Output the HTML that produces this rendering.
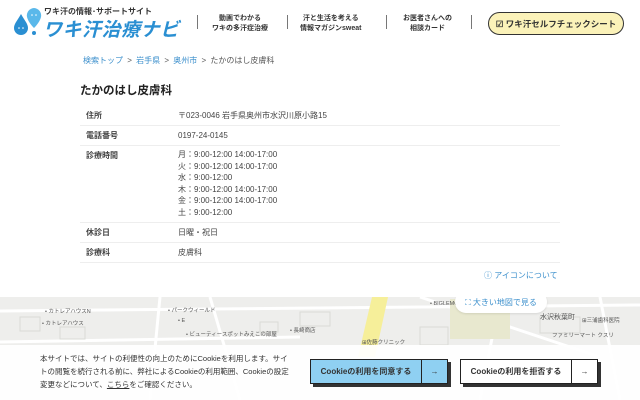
<!DOCTYPE html>
<html lang="ja"><head><meta charset="utf-8">
<style>
*{margin:0;padding:0;box-sizing:border-box}
body{width:640px;height:400px;overflow:hidden;background:#fff;font-family:"Liberation Sans","Noto Sans CJK JP",sans-serif;color:#333;position:relative}
.abs{position:absolute}
.nav{font-size:7px;font-weight:bold;text-align:center;line-height:10px;color:#333}
.sep{width:1px;height:14px;background:#777;top:15px}
.row{position:absolute;left:80px;width:480px;border-bottom:1px solid #eee;font-size:8px}
.row .k{position:absolute;left:6px;font-weight:bold;color:#444}
.row .v{position:absolute;left:98px;color:#444;line-height:11.5px}
.lbl{position:absolute;font-size:5.5px;color:#555;white-space:nowrap}
.btn{position:absolute;height:25px;border:1px solid #222;box-shadow:3px 3px 0 #333;font-size:8px;font-weight:bold;display:flex;align-items:center}
</style></head><body>
<svg class="abs" style="left:12px;top:6px" width="32" height="30" viewBox="0 0 32 30">
<path d="M9 8 C5 15 2 18 2 22 a7 7 0 0 0 14 0 C16 18 13 15 9 8Z" fill="#2a8fd2"/>
<path d="M22 2 a7.5 7.5 0 0 1 7 9 C28 15 25 19 22 22 C19 19 16 15 15 11 a7.5 7.5 0 0 1 7 -9Z" fill="#5ab8ea"/>
<circle cx="22" cy="27" r="2" fill="#2a8fd2"/>
<circle cx="7" cy="22" r="0.8" fill="#fff"/><circle cx="11" cy="22" r="0.8" fill="#fff"/>
<circle cx="20" cy="9" r="0.8" fill="#fff"/><circle cx="24" cy="9" r="0.8" fill="#fff"/>
</svg>
<div class="abs" style="left:44px;top:6px;font-size:8px;color:#333;font-weight:bold">ワキ汗の情報･サポートサイト</div>
<div class="abs" style="left:43px;top:15px;font-size:19px;color:#2a8fd2;font-weight:bold;font-style:italic;letter-spacing:0.5px">ワキ汗治療ナビ</div>
<div class="abs sep" style="left:197px"></div>
<div class="abs nav" style="left:212px;top:14px">動画でわかる<br>ワキの多汗症治療</div>
<div class="abs sep" style="left:287px"></div>
<div class="abs nav" style="left:300px;top:14px">汗と生活を考える<br>情報マガジンsweat</div>
<div class="abs sep" style="left:386px"></div>
<div class="abs nav" style="left:403px;top:14px">お医者さんへの<br>相談カード</div>
<div class="abs sep" style="left:471px"></div>
<div class="abs" style="left:488px;top:12px;width:136px;height:23px;border:1.5px solid #333;border-radius:12px;background:#fbf2b9;font-size:8.5px;font-weight:bold;display:flex;align-items:center;justify-content:center">☑ ワキ汗セルフチェックシート</div>
<div class="abs" style="left:83px;top:55px;font-size:8px;color:#555;word-spacing:2px"><span style="color:#3b8fcc">検索トップ</span> &gt; <span style="color:#3b8fcc">岩手県</span> &gt; <span style="color:#3b8fcc">奥州市</span> &gt; たかのはし皮膚科</div>
<div class="abs" style="left:80px;top:82px;font-size:11.5px;font-weight:bold;color:#222">たかのはし皮膚科</div>
<div class="row" style="top:106px;height:20px"><span class="k" style="top:4px">住所</span><span class="v" style="top:4px">〒023-0046 岩手県奥州市水沢川原小路15</span></div>
<div class="row" style="top:126px;height:20px"><span class="k" style="top:4px">電話番号</span><span class="v" style="top:4px">0197-24-0145</span></div>
<div class="row" style="top:146px;height:77px"><span class="k" style="top:4px">診療時間</span><span class="v" style="top:3px">月：9:00-12:00 14:00-17:00<br>火：9:00-12:00 14:00-17:00<br>水：9:00-12:00<br>木：9:00-12:00 14:00-17:00<br>金：9:00-12:00 14:00-17:00<br>土：9:00-12:00</span></div>
<div class="row" style="top:223px;height:20px"><span class="k" style="top:4px">休診日</span><span class="v" style="top:4px">日曜・祝日</span></div>
<div class="row" style="top:243px;height:20px"><span class="k" style="top:4px">診療科</span><span class="v" style="top:4px">皮膚科</span></div>
<div class="abs" style="left:484px;top:270px;font-size:8px;color:#3b8fcc">ⓘ アイコンについて</div>
<div class="abs" style="left:0;top:297px;width:640px;height:103px;background:#eeeeec;overflow:hidden">
<svg width="640" height="103" style="position:absolute;left:0;top:0">
<g stroke="#fff" stroke-width="3" fill="none">
<path d="M0 14 L640 8"/><path d="M160 0 L150 103"/><path d="M210 0 L240 103"/><path d="M420 0 L600 60"/><path d="M500 0 L480 103"/><path d="M600 0 L620 103"/><path d="M0 45 L300 40"/>
</g>
<path d="M372 0 L388 0 L375 60 L358 60Z" fill="#f6ef9a"/>
<g fill="none" stroke="#d9dbd6" stroke-width="1">
<rect x="20" y="20" width="20" height="14"/><rect x="60" y="30" width="25" height="12"/><rect x="260" y="25" width="18" height="10"/><rect x="300" y="15" width="30" height="14"/><rect x="420" y="30" width="28" height="18"/><rect x="540" y="20" width="40" height="16"/>
</g>
<rect x="450" y="2" width="60" height="40" fill="#e8e8cf"/>
</svg>
<div class="lbl" style="left:45px;top:10px">• カトレアハウスN</div>
<div class="lbl" style="left:42px;top:22px">• カトレアハウス</div>
<div class="lbl" style="left:168px;top:9px">• パークウィールド</div>
<div class="lbl" style="left:178px;top:21px">• E</div>
<div class="lbl" style="left:186px;top:33px">• ビューティースポットみえこの部屋</div>
<div class="lbl" style="left:290px;top:29px">• 長崎商店</div>
<div class="lbl" style="left:430px;top:4px">• BIGLEMON</div>
<div class="lbl" style="left:362px;top:41px">⊞佐藤クリニック</div>
<div class="lbl" style="left:540px;top:15px;font-size:7px">水沢秋葉町</div>
<div class="lbl" style="left:582px;top:19px">⊞三浦歯科医院</div>
<div class="lbl" style="left:552px;top:34px">ファミリーマート クスリ</div>
<div class="abs" style="left:455px;top:-6px;width:92px;height:22px;background:#fff;border-radius:11px;font-size:8px;color:#3b8fcc;display:flex;align-items:center;justify-content:center;box-shadow:0 1px 2px rgba(0,0,0,.1)">⛶ 大きい地図で見る</div>
</div>
<div class="abs" style="left:0;top:345px;width:640px;height:55px;background:rgba(255,255,255,0.93)"></div>
<div class="abs" style="left:40px;top:352px;font-size:7.5px;line-height:13px;color:#333;width:250px">本サイトでは、サイトの利便性の向上のためにCookieを利用します。サイトの閲覧を続行される前に、弊社によるCookieの利用範囲、Cookieの設定変更などについて、<u>こちら</u>をご確認ください。</div>
<div class="btn" style="left:310px;top:359px;width:138px;background:#8fd0f2"><span style="flex:1;text-align:center">Cookieの利用を同意する</span><span style="width:26px;height:100%;border-left:1px solid #222;display:flex;align-items:center;justify-content:center">→</span></div>
<div class="btn" style="left:460px;top:359px;width:138px;background:#fff"><span style="flex:1;text-align:center">Cookieの利用を拒否する</span><span style="width:26px;height:100%;border-left:1px solid #222;display:flex;align-items:center;justify-content:center">→</span></div>
</body></html>
